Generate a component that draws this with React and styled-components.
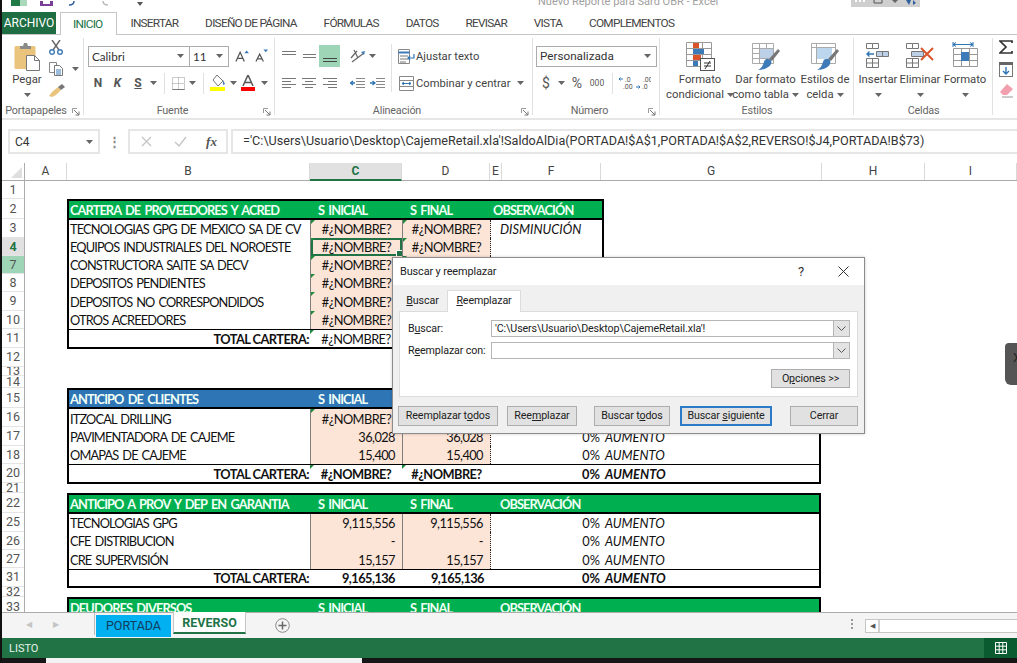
import React from 'react';
import styled, { createGlobalStyle } from 'styled-components';

const UI_FONT = 'Roboto, "Open Sans", sans-serif';
const SHEET_FONT = 'Lato, "Liberation Sans", sans-serif';

const GlobalStyle = createGlobalStyle`
  html, body { margin: 0; padding: 0; background: #111; overflow: hidden; }
  * { box-sizing: border-box; }
`;

/* ---------- icons ---------- */
const PasteIcon = () => (
  <svg width="27" height="29" viewBox="0 0 27 29">
    <rect x="0.5" y="4" width="21" height="23" rx="1.5" fill="#eac37c" />
    <path d="M6 4h3l1-3h3l1 3h3v3H6z" fill="#8a8a8a" />
    <path d="M12.5 13.5h8l5 5v10h-13z" fill="#fff" stroke="#777" />
    <path d="M20.5 13.5v5h5" fill="none" stroke="#777" />
  </svg>
);
const CutIcon = () => (
  <svg width="14" height="15" viewBox="0 0 14 15">
    <path d="M3 0l7 10M11 0L4 10" stroke="#666" strokeWidth="1.4" />
    <circle cx="3" cy="12" r="2.3" fill="none" stroke="#3d7ab8" strokeWidth="1.4" />
    <circle cx="11" cy="12" r="2.3" fill="none" stroke="#3d7ab8" strokeWidth="1.4" />
  </svg>
);
const CopyIcon = () => (
  <svg width="14" height="14" viewBox="0 0 14 14">
    <path d="M.5.5h7v10h-7z" fill="#fff" stroke="#888" />
    <path d="M5.5 3.5h5l3 3v7h-8z" fill="#fff" stroke="#777" />
    <path d="M7 8h5M7 10h5M7 12h5" stroke="#3d7ab8" />
  </svg>
);
const BrushIcon = () => (
  <svg width="16" height="14" viewBox="0 0 16 14">
    <path d="M9 3l3 3-5 5-4 2-3-1 3-4z" fill="#eac37c" />
    <path d="M9 3l4-3 3 3-4 3z" fill="#777" />
  </svg>
);
const BordersIcon = () => (
  <svg width="13" height="13" viewBox="0 0 13 13">
    <path d="M.5.5h12v12H.5zM6.5.5v12M.5 6.5h12" fill="none" stroke="#999" strokeDasharray="1 1" />
    <path d="M.5 12.5h12" stroke="#777" />
  </svg>
);
const FillIcon = () => (
  <svg width="16" height="16" viewBox="0 0 16 16">
    <path d="M7 0l6 6-5 5-5-6z" fill="#fff" stroke="#777" />
    <path d="M13 5l2 4-2 1z" fill="#3d7ab8" />
    <rect x="0" y="12" width="15" height="4" fill="#ffff00" />
  </svg>
);
const FontColorIcon = () => (
  <svg width="16" height="16" viewBox="0 0 16 16">
    <path d="M3 11L8 0l5 11M5 7.5h6" fill="none" stroke="#555" strokeWidth="1.5" />
    <rect x="1" y="12" width="14" height="4" fill="#ff0000" />
  </svg>
);
const GrowA = ({ up }) => (
  <svg width="15" height="14" viewBox="0 0 15 14">
    <path d={up ? 'M1 13L5.5 3 10 13M3 9.5h5' : 'M1 13L5 5l4 8M2.5 10h5'} fill="none" stroke="#555" strokeWidth="1.3" />
    <path d={up ? 'M10 4l2.5-3L15 4z' : 'M9 0h5l-2.5 3z'} fill="#3d7ab8" />
  </svg>
);
const LinesIcon = ({ rows, dark }) => (
  <svg width="14" height="14" viewBox="0 0 14 14">
    {rows.map(([x, y, w]) => (
      <rect key={y} x={x} y={y} width={w} height="1" fill={dark ? '#444' : '#777'} />
    ))}
  </svg>
);
const OrientIcon = () => (
  <svg width="16" height="14" viewBox="0 0 16 14">
    <path d="M1 9l6-7M4 1l4 8M2 13l12-9" fill="none" stroke="#666" strokeWidth="1.2" />
    <path d="M11 3l4-1-1 4z" fill="#3d7ab8" />
  </svg>
);
const IndentIcon = ({ flip }) => (
  <svg width="15" height="11" viewBox="0 0 15 11">
    <path d="M6 .5h9M6 3.5h9M6 6.5h9M6 9.5h9" stroke="#888" />
    <path d={flip ? 'M0 5h4M2.5 3L5 5 2.5 7' : 'M1 5h4M3 3L.5 5 3 7'} fill="none" stroke="#2f75b5" strokeWidth="1.3" />
  </svg>
);
const WrapIcon = () => (
  <svg width="17" height="15" viewBox="0 0 17 15">
    <path d="M.5.5h11v14H.5z" fill="#fff" stroke="#888" />
    <path d="M.5 3.5h11" stroke="#3d7ab8" strokeWidth="2" />
    <path d="M2 7h8M2 10h8M2 13h6" stroke="#777" />
    <path d="M16 5v4h-6M12 7l-2 2 2 2" fill="none" stroke="#2f75b5" strokeWidth="1.2" />
  </svg>
);
const MergeIcon = () => (
  <svg width="15" height="15" viewBox="0 0 15 15">
    <path d="M.5.5h14v14H.5zM.5 4.5h14M.5 10.5h14" fill="#fff" stroke="#888" />
    <path d="M3 7.5h9M3 7.5l2-1.5M3 7.5L5 9M12 7.5L10 6M12 7.5L10 9" fill="none" stroke="#2f75b5" />
  </svg>
);
const DecimalIcon = ({ more }) => (
  <svg width="16" height="14" viewBox="0 0 16 14">
    <path d={more ? 'M5 3H1M2.5 1.5L1 3l1.5 1.5' : 'M1 11h4M3.5 9.5L5 11l-1.5 1.5'} fill="none" stroke="#2f75b5" />
    <text x={more ? '7' : '8'} y="6" fontSize="7" fill="#555" fontFamily="Roboto">{more ? '.0' : '.00'}</text>
    <text x={more ? '5' : '7'} y="13" fontSize="7" fill="#555" fontFamily="Roboto">{more ? '.00' : '.0'}</text>
  </svg>
);
const ConditionalIcon = () => (
  <svg width="29" height="29" viewBox="0 0 29 29">
    <path d="M.5.5h25v24H.5zM8.5.5v24M16.5.5v24M.5 6.5h25M.5 12.5h25M.5 18.5h25" fill="#fff" stroke="#999" />
    <rect x="7" y="1" width="6" height="5" fill="#d9542b" />
    <rect x="7" y="7" width="11" height="5" fill="#3d7ab8" />
    <rect x="7" y="13" width="8" height="5" fill="#d9542b" />
    <rect x="7" y="19" width="5" height="5" fill="#3d7ab8" />
    <rect x="14.5" y="16.5" width="14" height="12" fill="#fff" stroke="#555" />
    <path d="M18 21h7M18 24h7M24 19l-5 8" stroke="#333" />
  </svg>
);
const TableIcon = () => (
  <svg width="28" height="29" viewBox="0 0 28 29">
    <path d="M.5 1.5h21v20H.5zM7.5 1.5v20M14.5 1.5v20M.5 6.5h21M.5 11.5h21M.5 16.5h21" fill="#fff" stroke="#aaa" />
    <rect x="8" y="7" width="13" height="9" fill="#bcd0e8" />
    <path d="M26 7l2 2-8 10-3-2z" fill="#777" />
    <path d="M16 17c3 0 4 2 3 5s-7 6-13 6c4-2 5-5 6-8s2-3 4-3z" fill="#3d7ab8" />
  </svg>
);
const CellStyleIcon = () => (
  <svg width="28" height="29" viewBox="0 0 28 29">
    <path d="M.5 1.5h24v20H.5z" fill="#fff" stroke="#aaa" />
    <path d="M.5 5.5h24M5.5 1.5v20" stroke="#aaa" />
    <rect x="6" y="6" width="15" height="11" fill="#bcd6ee" />
    <path d="M26 7l2 2-8 10-3-2z" fill="#777" />
    <path d="M16 17c3 0 4 2 3 5s-7 6-13 6c4-2 5-5 6-8s2-3 4-3z" fill="#3d7ab8" />
  </svg>
);
const InsertIcon = () => (
  <svg width="24" height="26" viewBox="0 0 24 26">
    <path d="M.5 1.5h6v5h-6zM6.5 1.5h6v5h-6zM.5 16.5h12v9H.5zM6.5 16.5v9M.5 21h12" fill="#fff" stroke="#777" />
    <path d="M10.5 9.5h12v5h-12zM16.5 9.5v5" fill="#bcd0e8" stroke="#777" />
    <path d="M8 12H1M3.5 9.5L1 12l2.5 2.5" fill="none" stroke="#2f75b5" strokeWidth="1.4" />
  </svg>
);
const DeleteIcon = () => (
  <svg width="28" height="26" viewBox="0 0 28 26">
    <path d="M.5 1.5h6v5h-6zM6.5 1.5h6v5h-6zM.5 16.5h12v9H.5zM6.5 16.5v9M.5 21h12" fill="#fff" stroke="#777" />
    <path d="M5.5 9.5h12v5h-12z" fill="#bcd0e8" stroke="#777" />
    <path d="M15 6l12 12M27 6L15 18" stroke="#d9542b" strokeWidth="2" />
  </svg>
);
const FormatIcon = () => (
  <svg width="27" height="28" viewBox="0 0 27 28">
    <path d="M1 0v5M21 0v5M1 2.5h20M1 2.5l3-2M1 2.5l3 2M21 2.5l-3-2M21 2.5l-3 2" fill="none" stroke="#2f75b5" />
    <path d="M1.5 6.5h24v18h-24zM9.5 6.5v18M17.5 6.5v18M1.5 12.5h24M1.5 18.5h24" fill="#fff" stroke="#999" />
    <rect x="9" y="10" width="8" height="9" fill="#3d7ab8" />
  </svg>
);
const SumIcon = () => (
  <svg width="14" height="14" viewBox="0 0 14 14">
    <path d="M13 3V1H1l6 6-6 6h12v-2" fill="none" stroke="#333" strokeWidth="1.7" />
  </svg>
);
const FillDownIcon = () => (
  <svg width="14" height="15" viewBox="0 0 14 15">
    <rect x="0.5" y="0.5" width="13" height="14" fill="#fff" stroke="#777" />
    <rect x="0" y="0" width="14" height="3" fill="#666" />
    <path d="M7 5v7M4 9l3 3 3-3" fill="none" stroke="#2f75b5" strokeWidth="1.4" />
  </svg>
);
const EraserIcon = () => (
  <svg width="15" height="14" viewBox="0 0 15 14">
    <path d="M8 0l6 5-6 6H4L1 8z" fill="#f2a0ad" />
    <path d="M3 13h11" stroke="#999" />
  </svg>
);
const DownCaret = () => (
  <svg width="7" height="4" viewBox="0 0 7 4">
    <path d="M0 0h7L3.5 4z" fill="#666" />
  </svg>
);
const Launcher = () => (
  <svg width="8" height="8" viewBox="0 0 8 8">
    <path d="M.5 5V.5H5" fill="none" stroke="#999" />
    <path d="M2 2l5 5M7 3.5V7H3.5" fill="none" stroke="#777" />
  </svg>
);

/* ---------- window ---------- */
const Frame = styled.div`
  width: 1017px;
  height: 663px;
  display: flex;
  flex-direction: column;
  border-left: 2px solid #111;
  background: #fff;
  overflow: hidden;
  position: relative;
  font-family: ${UI_FONT};
`;

const TitleBar = styled.div`
  height: 12px;
  flex: none;
  display: flex;
  align-items: flex-start;
  overflow: hidden;
`;
const QuickIcon = styled.span`
  width: ${(p) => p.$w}px;
  height: 6px;
  flex: none;
  display: flex;
  justify-content: center;
  align-items: flex-end;
  overflow: hidden;
`;
const WindowTitle = styled.span`
  margin: -6px 0 0 380px;
  width: 313px;
  font-size: 11px;
  line-height: 16px;
  color: #a0a0a0;
  white-space: nowrap;
`;
const TitleBox = styled.div`
  width: 69px;
  height: 7px;
  background: #cfcfcf;
  display: flex;
  justify-content: space-around;
  align-items: flex-start;
`;

const TabBar = styled.div`
  height: 23px;
  flex: none;
  display: flex;
  align-items: stretch;
  border-bottom: 1px solid #c6c6c6;
`;
const FileTab = styled.div`
  width: 54px;
  background: #1f6e43;
  color: #fff;
  font-size: 12px;
  display: flex;
  align-items: center;
  justify-content: center;
  margin-right: 4px;
`;
const RibbonTab = styled.div`
  padding: 0 13.4px;
  font-size: 11.8px;
  letter-spacing: -0.72px;
  line-height: 22px;
  white-space: nowrap;
  color: ${(p) => (p.$active ? '#217346' : '#444')};
  ${(p) =>
    p.$active &&
    `
    background: #fff;
    border: 1px solid #c6c6c6;
    border-bottom: 0;
    height: 23px;
    width: 57px;
    padding: 0 0 0 12px;
  `}
`;

const Ribbon = styled.div`
  height: 85px;
  flex: none;
  display: flex;
  border-bottom: 2px solid #e6e6e6;
`;
const Group = styled.section`
  width: ${(p) => p.$w}px;
  flex: none;
  display: flex;
  flex-direction: column;
  position: relative;
  &::after {
    content: '';
    position: absolute;
    right: 0;
    top: 3px;
    bottom: 3px;
    width: 1px;
    background: #e1e1e1;
  }
`;
const GroupBody = styled.div`
  height: 68px;
  display: flex;
  padding-left: ${(p) => p.$pad || 0}px;
`;
const GroupFoot = styled.div`
  height: 15px;
  font-size: 10.8px;
  letter-spacing: -0.2px;
  line-height: 15px;
  color: #666;
  text-align: center;
  display: flex;
  justify-content: center;
  position: relative;
  padding-right: ${(p) => (p.$launcher ? 14 : 0)}px;
`;
const LauncherSlot = styled.span`
  position: absolute;
  right: 4px;
  top: 5px;
  display: flex;
`;
const BigButton = styled.div`
  width: ${(p) => p.$w}px;
  flex: none;
  display: flex;
  flex-direction: column;
  align-items: center;
  padding-top: 7px;
  font-size: 11.3px;
  line-height: 14.5px;
  color: #444;
  text-align: center;
  white-space: nowrap;
`;
const BigIcon = styled.div`
  height: 29px;
  margin-bottom: 2px;
  display: flex;
  align-items: flex-start;
`;
const BigLine = styled.div`
  display: flex;
  align-items: center;
  gap: 3px;
  height: 14.5px;
`;
const SmallStack = styled.div`
  display: flex;
  flex-direction: column;
  padding-top: 5px;
  width: ${(p) => p.$w || 30}px;
  gap: 8px;
`;
const SmallTool = styled.div`
  height: 14px;
  display: flex;
  align-items: center;
  gap: 9px;
`;
const ToolColumn = styled.div`
  display: flex;
  flex-direction: column;
  padding-top: 10px;
  gap: 5px;
  width: ${(p) => (p.$w ? `${p.$w}px` : 'auto')};
  flex: none;
`;
const ToolRow = styled.div`
  height: 22px;
  display: flex;
  align-items: center;
`;
const Tool = styled.span`
  width: ${(p) => p.$w}px;
  height: 22px;
  flex: none;
  display: inline-flex;
  align-items: center;
  justify-content: center;
  color: #555;
  font-size: ${(p) => p.$size || 12}px;
  font-weight: ${(p) => (p.$bold ? 700 : 400)};
  font-style: ${(p) => (p.$italic ? 'italic' : 'normal')};
  text-decoration: ${(p) => (p.$under ? 'underline' : 'none')};
  background: ${(p) => (p.$on ? '#9fd5b7' : 'transparent')};
`;
const ToolSep = styled.span`
  width: ${(p) => p.$w}px;
  height: 21px;
  flex: none;
  position: relative;
  &::after {
    content: '';
    position: absolute;
    left: 50%;
    top: 0;
    bottom: 0;
    width: 1px;
    background: #e1e1e1;
  }
`;
const ColumnDivider = styled.div`
  width: 1px;
  height: 48px;
  margin: 9px 4px 0 4px;
  background: #e1e1e1;
  flex: none;
`;
const ToolText = styled.span`
  font-size: 11.2px;
  color: #444;
  white-space: nowrap;
  width: ${(p) => p.$w}px;
`;
const Combo = styled.div`
  width: ${(p) => p.$w}px;
  height: 21px;
  flex: none;
  display: flex;
  align-items: center;
  justify-content: space-between;
  padding: 0 5px 0 3px;
  background: #fff;
  border: 1px solid #ababab;
  margin-left: ${(p) => (p.$joined ? -1 : 0)}px;
  font-family: ${(p) => (p.$sheet ? SHEET_FONT : UI_FONT)};
  font-size: 11.7px;
  color: #333;
`;

/* ---------- formula bar ---------- */
const FormulaBar = styled.div`
  height: 25px;
  margin: 9px 0 9px 6px;
  flex: none;
  display: flex;
  align-items: stretch;
`;
const NameBox = styled.div`
  width: 92px;
  border: 2px solid #e6e6e6;
  display: flex;
  align-items: center;
  justify-content: space-between;
  padding: 0 5px;
  font-size: 12px;
  color: #333;
`;
const GripDots = styled.div`
  width: 28px;
  display: flex;
  align-items: center;
  justify-content: center;
  color: #888;
  font-size: 13px;
  font-weight: 700;
`;
const FxButtons = styled.div`
  width: 100px;
  border: 2px solid #e6e6e6;
  display: grid;
  grid-template-columns: 33px 34px 1fr;
  align-items: center;
  justify-items: center;
  margin-right: 3px;
  color: #bbb;
`;
const FxMark = styled.span`
  font-family: 'Liberation Serif', serif;
  font-style: italic;
  font-weight: 700;
  font-size: 13px;
  color: #555;
`;
const FormulaInput = styled.div`
  flex: 1;
  min-width: 0;
  border: 2px solid #e6e6e6;
  border-right: 0;
  padding-left: 10px;
  font-size: 12.62px;
  line-height: 20px;
  color: #333;
  white-space: nowrap;
  overflow: hidden;
`;

/* ---------- sheet ---------- */
const ColHeaders = styled.div`
  height: 18px;
  flex: none;
  display: flex;
  border-bottom: 1px solid #ababab;
`;
const Corner = styled.div`
  width: 23px;
  flex: none;
  border-right: 1px solid #ababab;
  position: relative;
  &::after {
    content: '';
    position: absolute;
    right: 2px;
    bottom: 2px;
    border-left: 11px solid transparent;
    border-bottom: 11px solid #dfdfdf;
  }
`;
const ColHead = styled.div`
  width: ${(p) => p.$w}px;
  flex: none;
  border-right: 1px solid #d9d9d9;
  font-size: 12px;
  text-align: center;
  line-height: 17px;
  overflow: hidden;
  color: ${(p) => (p.$on ? '#217346' : '#444')};
  font-weight: ${(p) => (p.$on ? 700 : 400)};
  background: ${(p) => (p.$on ? '#e1e1e1' : '#fff')};
  border-bottom: ${(p) => (p.$on ? '2px solid #217346' : '0')};
  height: ${(p) => (p.$on ? 18 : 17)}px;
`;
const SheetBody = styled.div`
  height: 431px;
  flex: none;
  display: flex;
  overflow: hidden;
`;
const RowHeaders = styled.div`
  width: 23px;
  flex: none;
  border-right: 1px solid #ababab;
`;
const RowHead = styled.div`
  height: ${(p) => p.$h}px;
  border-bottom: 1px solid #e4e4e4;
  font-size: 12.5px;
  line-height: ${(p) => p.$h - 1}px;
  text-align: center;
  overflow: hidden;
  color: ${(p) => (p.$state === 'active' ? '#217346' : '#555')};
  font-weight: ${(p) => (p.$state === 'active' ? 700 : 400)};
  background: ${(p) =>
    p.$state === 'active' ? '#e1e1e1' : p.$state === 'range' ? '#9fd5b7' : '#fff'};
`;
const Cells = styled.div`
  flex: 1;
  min-width: 0;
  padding: 18px 0 0 42px;
  display: flex;
  flex-direction: column;
  font-family: ${SHEET_FONT};
  font-size: 12.8px;
  letter-spacing: -0.55px;
  color: #111;
`;
const Block = styled.div`
  width: ${(p) => p.$w}px;
  flex: none;
  border: 2px solid #000;
  margin-bottom: ${(p) => p.$after}px;
`;
const HeadRow = styled.div`
  height: ${(p) => p.$h}px;
  display: grid;
  grid-template-columns: 241px 92px 89px 1fr;
  align-items: center;
  font-weight: 700;
  letter-spacing: -0.9px;
  word-spacing: 2px;
  color: #f1fff5;
  background: ${(p) => p.$bg};
  border-bottom: 2px solid #000;
  span { padding-left: 1px; white-space: nowrap; }
  span + span { padding-left: 8px; }
`;
const HeadObs = styled.span`
  && { padding-left: ${(p) => p.$pad}px; }
`;
const DataRow = styled.div`
  height: ${(p) => p.$h}px;
  display: grid;
  grid-template-columns: 241px 92px 89px 1fr;
  align-items: stretch;
  border-top: ${(p) => (p.$total ? '1px solid #000' : '0')};
`;
const LabelCell = styled.div`
  padding-left: 1px;
  display: flex;
  align-items: center;
  justify-content: ${(p) => (p.$total ? 'flex-end' : 'flex-start')};
  font-weight: ${(p) => (p.$total ? 700 : 400)};
  letter-spacing: ${(p) => (p.$total ? -0.55 : -0.85)}px;
  word-spacing: ${(p) => (p.$total ? 0 : 1.5)}px;
  white-space: nowrap;
  padding-right: 1px;
`;
const ValueCell = styled.div`
  position: relative;
  display: flex;
  align-items: center;
  white-space: nowrap;
  justify-content: ${(p) => (p.$num ? 'flex-end' : 'center')};
  padding-right: ${(p) => (p.$num ? 7 : 0)}px;
  background: ${(p) => (p.$peach ? '#fce4d6' : 'transparent')};
  border-left: ${(p) => (p.$peach ? '1px solid #7f7f7f' : '0')};
  border-right: ${(p) => (p.$dotted ? '1.5px dotted #222' : '0')};
  font-weight: ${(p) => (p.$bold ? 700 : 400)};
  box-shadow: ${(p) => (p.$selected ? 'inset 0 0 0 2px #217346' : 'none')};
  ${(p) =>
    p.$flag &&
    `
    &::before {
      content: '';
      position: absolute;
      left: 0;
      top: 0;
      border-top: 4px solid #1e8a3c;
      border-right: 4px solid transparent;
    }
  `}
  ${(p) =>
    p.$selected &&
    `
    &::after {
      content: '';
      position: absolute;
      right: -1px;
      bottom: -1px;
      width: 5px;
      height: 5px;
      background: #217346;
      border: 1px solid #fff;
    }
  `}
`;
const ObsCell = styled.div`
  display: flex;
  align-items: center;
  white-space: nowrap;
  padding-left: ${(p) => p.$pad || 0}px;
  font-style: italic;
  letter-spacing: 0;
  font-weight: ${(p) => (p.$bold ? 700 : 400)};
`;
const Pct = styled.span`
  width: 109px;
  text-align: right;
  font-style: normal;
  margin-right: 5px;
`;

/* ---------- sheet tabs / status ---------- */
const SheetTabs = styled.div`
  height: 26px;
  flex: none;
  display: flex;
  background: #f4f4f4;
  border-top: 1px solid #ababab;
`;
const TabNav = styled.div`
  width: 93px;
  flex: none;
  display: flex;
  align-items: center;
  padding-left: 24px;
  gap: 21px;
  color: #c4c4c4;
  font-size: 8px;
  border-right: 1px solid #bbb;
  height: 22px;
`;
const BlueTab = styled.div`
  width: 75px;
  height: 22px;
  margin: 2px 2px 0 1px;
  background: #00b0f0;
  color: #123c5c;
  font-size: 12.5px;
  line-height: 21px;
  text-align: center;
`;
const ActiveTab = styled.div`
  width: 73px;
  height: 22px;
  margin-top: -1px;
  background: #fff;
  border: 1px solid #c6c6c6;
  border-top: 0;
  border-bottom: 2px solid #217346;
  color: #217346;
  font-size: 12.5px;
  font-weight: 700;
  line-height: 21px;
  text-align: center;
`;
const AddSheet = styled.div`
  width: 15px;
  height: 15px;
  margin: 5px 0 0 29px;
  flex: none;
`;
const ScrollGrip = styled.div`
  margin: 5px 0 0 560px;
  width: 4px;
  height: 12px;
  flex: none;
  background-image: radial-gradient(#999 1px, transparent 1.2px);
  background-size: 4px 4px;
`;
const HScroll = styled.div`
  margin: 6px 0 0 11px;
  flex: 1;
  height: 14px;
  display: flex;
  background: #fff;
  border: 1px solid #c6c6c6;
  border-right: 0;
`;
const ScrollArrow = styled.div`
  width: 14px;
  border-right: 2px solid #d0d0d0;
  display: flex;
  align-items: center;
  justify-content: center;
  color: #555;
  font-size: 7px;
`;
const StatusBar = styled.div`
  height: 20px;
  flex: none;
  background: #217346;
  display: flex;
  align-items: center;
  justify-content: space-between;
  color: #e6f2ea;
  font-size: 11px;
  padding-left: 7px;
`;
const ViewButton = styled.div`
  width: 33px;
  height: 20px;
  background: #0a5c30;
  display: flex;
  align-items: center;
  justify-content: flex-start;
  padding-left: 11px;
`;
const BottomEdge = styled.div`
  height: 5px;
  flex: none;
  background: #161616;
  padding-left: 44px;
`;
const BottomBar = styled.div`
  width: 316px;
  height: 5px;
  background: #f2f2f2;
`;

/* ---------- overlays ---------- */
const Dialog = styled.div`
  position: absolute;
  left: 390px;
  top: 257px;
  width: 473px;
  height: 177px;
  background: #f0f0f0;
  border: 1px solid #8c8c8c;
  box-shadow: 0 0 3px rgba(0, 0, 0, 0.2);
  display: flex;
  flex-direction: column;
  font-size: 10.7px;
  letter-spacing: -0.12px;
  color: #222;
`;
const DialogTitle = styled.div`
  height: 27px;
  flex: none;
  background: #fff;
  display: flex;
  align-items: center;
  padding-left: 7px;
  font-size: 10.9px;
`;
const TitleText = styled.span`
  flex: 1;
`;
const HelpMark = styled.span`
  font-size: 13px;
  width: 42px;
  text-align: center;
  color: #333;
`;
const CloseMark = styled.span`
  width: 42px;
  display: flex;
  justify-content: center;
`;
const DialogTabs = styled.div`
  height: 26px;
  flex: none;
  display: flex;
  align-items: flex-end;
  padding-left: 5px;
`;
const DialogTab = styled.div`
  height: ${(p) => (p.$active ? 22 : 20)}px;
  width: ${(p) => (p.$active ? 74 : 49)}px;
  text-align: center;
  line-height: 20px;
  position: relative;
  ${(p) =>
    p.$active &&
    `
    background: #fff;
    border: 1px solid #dcdcdc;
    border-bottom: 0;
    margin-bottom: -1px;
    z-index: 1;
  `}
`;
const DialogPanel = styled.div`
  margin: 0 6px;
  height: 86px;
  flex: none;
  background: #fff;
  border: 1px solid #dcdcdc;
  padding: 8px 7px 0 8px;
  display: flex;
  flex-direction: column;
  gap: 5px;
`;
const FieldRow = styled.div`
  display: flex;
  align-items: center;
  height: 17px;
`;
const FieldLabel = styled.span`
  width: 83px;
  flex: none;
  white-space: nowrap;
`;
const FieldInput = styled.div`
  flex: 1;
  height: 17px;
  border: 1px solid #b5b5b5;
  display: flex;
  align-items: center;
  justify-content: space-between;
  padding-left: 3px;
  white-space: nowrap;
`;
const FieldDrop = styled.span`
  width: 16px;
  height: 15px;
  background: #e3e3e3;
  border-left: 1px solid #b5b5b5;
  display: flex;
  align-items: center;
  justify-content: center;
`;
const OptionsRow = styled.div`
  display: flex;
  justify-content: flex-end;
  margin-top: 5px;
`;
const DialogButton = styled.div`
  width: ${(p) => p.$w}px;
  height: ${(p) => p.$h || 20}px;
  line-height: ${(p) => (p.$h || 20) - (p.$primary ? 4 : 2)}px;
  flex: none;
  background: #e1e1e1;
  border: ${(p) => (p.$primary ? '2px solid #2b7bc9' : '1px solid #adadad')};
  margin-left: ${(p) => p.$gap || 0}px;
  text-align: center;
  white-space: nowrap;
`;
const DialogActions = styled.div`
  display: flex;
  margin-top: 9px;
  padding-left: 5px;
`;
const SideHandle = styled.div`
  position: absolute;
  right: -2px;
  top: 343px;
  width: 14px;
  height: 42px;
  background: #555;
  border-radius: 4px 0 0 6px;
  overflow: hidden;
  color: #222;
  font-size: 13px;
  line-height: 30px;
  padding-left: 8px;
`;

/* ---------- data ---------- */
const ROW_HEADS = [
  ['1', 18], ['2', 20], ['3', 19], ['4', 18, 'active'], ['7', 18, 'range'], ['8', 18], ['9', 19],
  ['10', 18], ['11', 19], ['12', 19], ['13', 9], ['14', 12], ['15', 20], ['16', 19], ['17', 19],
  ['18', 18], ['20', 19], ['21', 10], ['22', 20], ['25', 19], ['26', 18], ['27', 18], ['31', 19],
  ['32', 10], ['33', 20],
];
const COLS = [['A', 42], ['B', 243], ['C', 92, true], ['D', 88], ['E', 12], ['F', 99], ['G', 221], ['H', 103], ['I', 92]];
const ERR = '#¿NOMBRE?';

const Row = ({ h, label, c, d, flag, flagD, num }) => (
  <DataRow $h={h}>
    <LabelCell>{label}</LabelCell>
    <ValueCell $peach $flag={flag} $num={num}>{c}</ValueCell>
    <ValueCell $peach $dotted $flag={flagD} $num={num}>{d}</ValueCell>
    <ObsCell>
      <Pct>0%</Pct>
      AUMENTO
    </ObsCell>
  </DataRow>
);

const Total = ({ h, c, d, num, bold, flag }) => (
  <DataRow $h={h} $total>
    <LabelCell $total>TOTAL CARTERA:</LabelCell>
    <ValueCell $flag={flag} $num={num} $bold={bold}>{c}</ValueCell>
    <ValueCell $flag={flag} $num={num} $bold={bold}>{d}</ValueCell>
    <ObsCell $bold>
      <Pct>0%</Pct>
      AUMENTO
    </ObsCell>
  </DataRow>
);

const Caret = () => <Tool $w={10}><DownCaret /></Tool>;

const App = () => (
  <Frame>
    <GlobalStyle />
    <TitleBar>
      <QuickIcon $w={34}>
        <svg width="16" height="6" viewBox="0 0 16 6"><rect width="16" height="6" fill="#1f7a45" /><rect x="9" width="7" height="6" fill="#a9d8bb" /></svg>
      </QuickIcon>
      <QuickIcon $w={20}>
        <svg width="13" height="5" viewBox="0 0 13 5"><rect width="13" height="5" fill="#7a3f98" /><rect x="3" width="7" height="3" fill="#fff" /></svg>
      </QuickIcon>
      <QuickIcon $w={32}>
        <svg width="6" height="5" viewBox="0 0 6 5"><path d="M5 0c0 3-2 4-5 4" fill="none" stroke="#2f5f9e" strokeWidth="1.5" /></svg>
      </QuickIcon>
      <QuickIcon $w={34}>
        <svg width="6" height="5" viewBox="0 0 6 5"><path d="M1 0c0 3 2 4 5 4" fill="none" stroke="#bbb" strokeWidth="1.5" /></svg>
      </QuickIcon>
      <QuickIcon $w={36}>
        <svg width="6" height="4" viewBox="0 0 6 4"><path d="M0 0h6L3 4z" fill="#555" /></svg>
      </QuickIcon>
      <WindowTitle>Nuevo Reporte para Sard OBR - Excel</WindowTitle>
      <TitleBox>
        <svg width="10" height="4" viewBox="0 0 10 4"><path d="M0 0h2v2H0zM4 0h2v2H4zM8 0h2v2H8z" fill="#fff" /></svg>
        <svg width="10" height="4" viewBox="0 0 10 4"><path d="M1 0v3h8V0" fill="none" stroke="#555" /></svg>
        <svg width="6" height="3" viewBox="0 0 6 3"><path d="M0 0h6L3 3z" fill="#666" /></svg>
        <svg width="10" height="5" viewBox="0 0 10 5"><path d="M0 0h5L3 5zM7 0l3 3-3 2z" fill="#2f5f9e" /></svg>
      </TitleBox>
    </TitleBar>

    <TabBar>
      <FileTab>ARCHIVO</FileTab>
      <RibbonTab $active>INICIO</RibbonTab>
      <RibbonTab>INSERTAR</RibbonTab>
      <RibbonTab>DISEÑO DE PÁGINA</RibbonTab>
      <RibbonTab>FÓRMULAS</RibbonTab>
      <RibbonTab>DATOS</RibbonTab>
      <RibbonTab>REVISAR</RibbonTab>
      <RibbonTab>VISTA</RibbonTab>
      <RibbonTab>COMPLEMENTOS</RibbonTab>
    </TabBar>

    <Ribbon>
      <Group $w={82}>
        <GroupBody $pad={3}>
          <BigButton $w={44}>
            <BigIcon><PasteIcon /></BigIcon>
            <BigLine>Pegar</BigLine>
            <BigLine><DownCaret /></BigLine>
          </BigButton>
          <SmallStack>
            <SmallTool><CutIcon /></SmallTool>
            <SmallTool><CopyIcon /><DownCaret /></SmallTool>
            <SmallTool><BrushIcon /></SmallTool>
          </SmallStack>
        </GroupBody>
        <GroupFoot $launcher>Portapapeles<LauncherSlot><Launcher /></LauncherSlot></GroupFoot>
      </Group>

      <Group $w={191}>
        <GroupBody $pad={4}>
          <ToolColumn>
            <ToolRow>
              <Combo $w={102} $sheet>Calibri<DownCaret /></Combo>
              <Combo $w={40} $joined $sheet>11<DownCaret /></Combo>
              <Tool $w={6} />
              <Tool $w={14}><GrowA up /></Tool>
              <Tool $w={6} />
              <Tool $w={14}><GrowA /></Tool>
            </ToolRow>
            <ToolRow>
              <Tool $w={20} $bold $size={12}>N</Tool>
              <Tool $w={19} $bold $italic $size={12}>K</Tool>
              <Tool $w={22} $bold $under $size={12}>S</Tool>
              <Tool $w={9}><DownCaret /></Tool>
              <ToolSep $w={11} />
              <Tool $w={18}><BordersIcon /></Tool>
              <Tool $w={11}><DownCaret /></Tool>
              <ToolSep $w={10} />
              <Tool $w={20}><FillIcon /></Tool>
              <Tool $w={10}><DownCaret /></Tool>
              <Tool $w={20}><FontColorIcon /></Tool>
              <Tool $w={12}><DownCaret /></Tool>
            </ToolRow>
          </ToolColumn>
        </GroupBody>
        <GroupFoot $launcher>Fuente<LauncherSlot><Launcher /></LauncherSlot></GroupFoot>
      </Group>

      <Group $w={258}>
        <GroupBody $pad={4}>
          <ToolColumn $w={108}>
            <ToolRow>
              <Tool $w={20}><LinesIcon rows={[[0, 2, 14], [0, 5, 14]]} /></Tool>
              <Tool $w={20}><LinesIcon rows={[[1, 5, 13], [1, 8, 13]]} /></Tool>
              <Tool $w={21} $on><LinesIcon dark rows={[[0, 9, 14], [0, 12, 14]]} /></Tool>
              <Tool $w={7} />
              <Tool $w={22}><OrientIcon /></Tool>
              <Tool $w={7}><DownCaret /></Tool>
            </ToolRow>
            <ToolRow>
              <Tool $w={20}><LinesIcon rows={[[0, 2, 14], [0, 5, 9], [0, 8, 14], [0, 11, 9]]} /></Tool>
              <Tool $w={20}><LinesIcon rows={[[0, 2, 14], [3, 5, 8], [0, 8, 14], [3, 11, 8]]} /></Tool>
              <Tool $w={21}><LinesIcon rows={[[0, 2, 14], [5, 5, 9], [0, 8, 14], [5, 11, 9]]} /></Tool>
              <Tool $w={7} />
              <Tool $w={20}><IndentIcon /></Tool>
              <Tool $w={21}><IndentIcon flip /></Tool>
            </ToolRow>
          </ToolColumn>
          <ColumnDivider />
          <ToolColumn>
            <ToolRow>
              <Tool $w={20}><WrapIcon /></Tool>
              <ToolText>Ajustar texto</ToolText>
            </ToolRow>
            <ToolRow>
              <Tool $w={20}><MergeIcon /></Tool>
              <ToolText $w={101}>Combinar y centrar</ToolText>
              <DownCaret />
            </ToolRow>
          </ToolColumn>
        </GroupBody>
        <GroupFoot $launcher>Alineación<LauncherSlot><Launcher /></LauncherSlot></GroupFoot>
      </Group>

      <Group $w={127}>
        <GroupBody $pad={3}>
          <ToolColumn>
            <ToolRow>
              <Combo $w={121}>Personalizada<DownCaret /></Combo>
            </ToolRow>
            <ToolRow>
              <Tool $w={20} $size={14}>$</Tool>
              <Caret />
              <Tool $w={22} $size={14}>%</Tool>
              <Tool $w={18} $size={8.5}>000</Tool>
              <ToolSep $w={12} />
              <Tool $w={16}><DecimalIcon more /></Tool>
              <Tool $w={18}><DecimalIcon /></Tool>
            </ToolRow>
          </ToolColumn>
        </GroupBody>
        <GroupFoot $launcher>Número<LauncherSlot><Launcher /></LauncherSlot></GroupFoot>
      </Group>

      <Group $w={194}>
        <GroupBody $pad={9}>
          <BigButton $w={62}>
            <BigIcon><ConditionalIcon /></BigIcon>
            <BigLine>Formato</BigLine>
            <BigLine>condicional <DownCaret /></BigLine>
          </BigButton>
          <BigButton $w={69}>
            <BigIcon><TableIcon /></BigIcon>
            <BigLine>Dar formato</BigLine>
            <BigLine>como tabla <DownCaret /></BigLine>
          </BigButton>
          <BigButton $w={50}>
            <BigIcon><CellStyleIcon /></BigIcon>
            <BigLine>Estilos de</BigLine>
            <BigLine>celda <DownCaret /></BigLine>
          </BigButton>
        </GroupBody>
        <GroupFoot>Estilos</GroupFoot>
      </Group>

      <Group $w={139}>
        <GroupBody $pad={4}>
          <BigButton $w={40}>
            <BigIcon><InsertIcon /></BigIcon>
            <BigLine>Insertar</BigLine>
            <BigLine><DownCaret /></BigLine>
          </BigButton>
          <BigButton $w={44}>
            <BigIcon><DeleteIcon /></BigIcon>
            <BigLine>Eliminar</BigLine>
            <BigLine><DownCaret /></BigLine>
          </BigButton>
          <BigButton $w={46}>
            <BigIcon><FormatIcon /></BigIcon>
            <BigLine>Formato</BigLine>
            <BigLine><DownCaret /></BigLine>
          </BigButton>
        </GroupBody>
        <GroupFoot>Celdas</GroupFoot>
      </Group>

      <GroupBody $pad={6}>
        <SmallStack>
          <SmallTool><SumIcon /></SmallTool>
          <SmallTool><FillDownIcon /></SmallTool>
          <SmallTool><EraserIcon /></SmallTool>
        </SmallStack>
      </GroupBody>
    </Ribbon>

    <FormulaBar>
      <NameBox>C4<DownCaret /></NameBox>
      <GripDots>⋮</GripDots>
      <FxButtons>
        <svg width="11" height="11" viewBox="0 0 11 11"><path d="M1 1l9 9M10 1l-9 9" stroke="#c4c4c4" strokeWidth="1.3" /></svg>
        <svg width="13" height="11" viewBox="0 0 13 11"><path d="M1 6l4 4 7-9" fill="none" stroke="#c4c4c4" strokeWidth="1.3" /></svg>
        <FxMark>fx</FxMark>
      </FxButtons>
      <FormulaInput>='C:\Users\Usuario\Desktop\CajemeRetail.xla'!SaldoAlDia(PORTADA!$A$1,PORTADA!$A$2,REVERSO!$J4,PORTADA!B$73)</FormulaInput>
    </FormulaBar>

    <ColHeaders>
      <Corner />
      {COLS.map(([name, w, on]) => (
        <ColHead key={name} $w={w} $on={on}>{name}</ColHead>
      ))}
    </ColHeaders>

    <SheetBody>
      <RowHeaders>
        {ROW_HEADS.map(([n, h, state]) => (
          <RowHead key={n} $h={h} $state={state}>{n}</RowHead>
        ))}
      </RowHeaders>
      <Cells>
        <Block $w={537} $after={39}>
          <HeadRow $h={19} $bg="#00b050">
            <span>CARTERA DE PROVEEDORES Y ACRED</span>
            <span>S INICIAL</span>
            <span>S FINAL</span>
            <HeadObs $pad={2}>OBSERVACIÓN</HeadObs>
          </HeadRow>
          <DataRow $h={18}>
            <LabelCell>TECNOLOGIAS GPG DE MEXICO SA DE CV</LabelCell>
            <ValueCell $peach $flag>{ERR}</ValueCell>
            <ValueCell $peach $dotted $flag>{ERR}</ValueCell>
            <ObsCell $pad={9}>DISMINUCIÓN</ObsCell>
          </DataRow>
          <DataRow $h={18}>
            <LabelCell>EQUIPOS INDUSTRIALES DEL NOROESTE</LabelCell>
            <ValueCell $peach $flag $selected>{ERR}</ValueCell>
            <ValueCell $peach $dotted $flag>{ERR}</ValueCell>
            <ObsCell />
          </DataRow>
          {[
            ['CONSTRUCTORA SAITE SA DECV', 18],
            ['DEPOSITOS PENDIENTES', 18],
            ['DEPOSITOS NO CORRESPONDIDOS', 19],
            ['OTROS ACREEDORES', 18],
          ].map(([label, h]) => (
            <DataRow key={label} $h={h}>
              <LabelCell>{label}</LabelCell>
              <ValueCell $peach $flag>{ERR}</ValueCell>
              <ValueCell $peach $dotted $flag>{ERR}</ValueCell>
              <ObsCell />
            </DataRow>
          ))}
          <DataRow $h={18} $total>
            <LabelCell $total>TOTAL CARTERA:</LabelCell>
            <ValueCell $flag>{ERR}</ValueCell>
            <ValueCell $flag>{ERR}</ValueCell>
            <ObsCell />
          </DataRow>
        </Block>

        <Block $w={754} $after={9}>
          <HeadRow $h={19} $bg="#2e75b6">
            <span>ANTICIPO DE CLIENTES</span>
            <span>S INICIAL</span>
            <span>S FINAL</span>
            <HeadObs $pad={9}>OBSERVACIÓN</HeadObs>
          </HeadRow>
          <Row h={19} label="ITZOCAL DRILLING" c={ERR} d={ERR} flag flagD />
          <Row h={18} label="PAVIMENTADORA DE CAJEME" c="36,028" d="36,028" num />
          <Row h={18} label="OMAPAS DE CAJEME" c="15,400" d="15,400" num />
          <Total h={18} c={ERR} d={ERR} bold flag />
        </Block>

        <Block $w={754} $after={9}>
          <HeadRow $h={19} $bg="#00b050">
            <span>ANTICIPO A PROV Y DEP EN GARANTIA</span>
            <span>S INICIAL</span>
            <span>S FINAL</span>
            <HeadObs $pad={9}>OBSERVACIÓN</HeadObs>
          </HeadRow>
          <Row h={18} label="TECNOLOGIAS GPG" c="9,115,556" d="9,115,556" num />
          <Row h={18} label="CFE DISTRIBUCION" c="-" d="-" num />
          <Row h={19} label="CRE SUPERVISIÓN" c="15,157" d="15,157" num />
          <Total h={17} c="9,165,136" d="9,165,136" num bold />
        </Block>

        <Block $w={754} $after={0}>
          <HeadRow $h={19} $bg="#00b050">
            <span>DEUDORES DIVERSOS</span>
            <span>S INICIAL</span>
            <span>S FINAL</span>
            <HeadObs $pad={9}>OBSERVACIÓN</HeadObs>
          </HeadRow>
        </Block>
      </Cells>
    </SheetBody>

    <SheetTabs>
      <TabNav><span>◀</span><span>▶</span></TabNav>
      <BlueTab>PORTADA</BlueTab>
      <ActiveTab>REVERSO</ActiveTab>
      <AddSheet>
        <svg width="15" height="15" viewBox="0 0 15 15"><circle cx="7.5" cy="7.5" r="6.8" fill="none" stroke="#8a8a8a" /><path d="M7.5 3.5v8M3.5 7.5h8" stroke="#666" strokeWidth="1.5" /></svg>
      </AddSheet>
      <ScrollGrip />
      <HScroll><ScrollArrow>◀</ScrollArrow></HScroll>
    </SheetTabs>
    <StatusBar>
      LISTO
      <ViewButton>
        <svg width="12" height="12" viewBox="0 0 12 12"><path d="M.5.5h11v11H.5zM4.2.5v11M7.8.5v11M.5 4.2h11M.5 7.8h11" fill="none" stroke="#fff" /></svg>
      </ViewButton>
    </StatusBar>
    <BottomEdge><BottomBar /></BottomEdge>

    <Dialog>
      <DialogTitle>
        <TitleText>Buscar y reemplazar</TitleText>
        <HelpMark>?</HelpMark>
        <CloseMark>
          <svg width="11" height="11" viewBox="0 0 11 11"><path d="M.5.5l10 10M10.5.5l-10 10" stroke="#333" /></svg>
        </CloseMark>
      </DialogTitle>
      <DialogTabs>
        <DialogTab><u>B</u>uscar</DialogTab>
        <DialogTab $active><u>R</u>eemplazar</DialogTab>
      </DialogTabs>
      <DialogPanel>
        <FieldRow>
          <FieldLabel>B<u>u</u>scar:</FieldLabel>
          <FieldInput>
            'C:\Users\Usuario\Desktop\CajemeRetail.xla'!
            <FieldDrop><svg width="9" height="5" viewBox="0 0 9 5"><path d="M.5.5l4 4 4-4" fill="none" stroke="#555" /></svg></FieldDrop>
          </FieldInput>
        </FieldRow>
        <FieldRow>
          <FieldLabel>R<u>e</u>emplazar con:</FieldLabel>
          <FieldInput>
            <span />
            <FieldDrop><svg width="9" height="5" viewBox="0 0 9 5"><path d="M.5.5l4 4 4-4" fill="none" stroke="#555" /></svg></FieldDrop>
          </FieldInput>
        </FieldRow>
        <OptionsRow>
          <DialogButton $w={79} $h={19}>O<u>p</u>ciones &gt;&gt;</DialogButton>
        </OptionsRow>
      </DialogPanel>
      <DialogActions>
        <DialogButton $w={100}>Reemplazar t<u>o</u>dos</DialogButton>
        <DialogButton $w={70} $gap={9}>Ree<u>m</u>plazar</DialogButton>
        <DialogButton $w={76} $gap={17}>Buscar t<u>o</u>dos</DialogButton>
        <DialogButton $w={92} $gap={10} $primary>Buscar <u>s</u>iguiente</DialogButton>
        <DialogButton $w={68} $gap={18}>Cerrar</DialogButton>
      </DialogActions>
    </Dialog>
    <SideHandle>X</SideHandle>
  </Frame>
);

export default App;
